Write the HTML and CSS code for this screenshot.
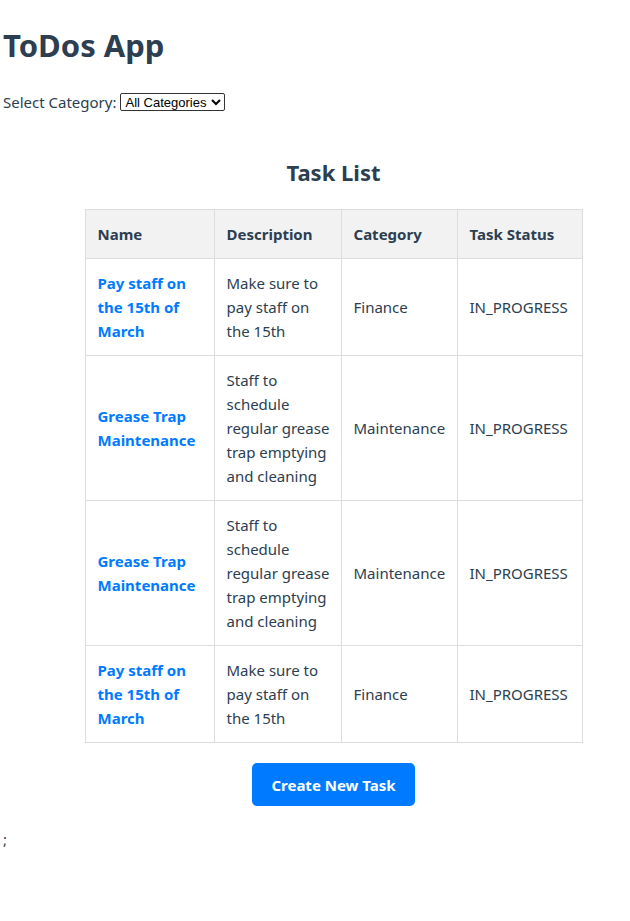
FILE: index.html
```html
<!DOCTYPE html>
<html>
<head>
<meta charset="utf-8">
<link rel="stylesheet" href="styles.css">
</head>
<body>
<div class="app">
  <h1 class="title">ToDos App</h1>
  <div class="filter">
    <label class="filter-label">Select Category:</label>
    <select class="filter-select">
      <option>All Categories</option>
    </select>
  </div>
  <div class="tasks">
    <h2 class="tasks-title">Task List</h2>
    <table class="task-table">
      <colgroup>
        <col class="c1"><col class="c2"><col class="c3"><col class="c4">
      </colgroup>
      <thead>
        <tr><th>Name</th><th>Description</th><th>Category</th><th>Task Status</th></tr>
      </thead>
      <tbody>
        <tr>
          <td><a class="task-link" href="#">Pay staff on the 15th of March</a></td>
          <td>Make sure to pay staff on the 15th</td>
          <td>Finance</td>
          <td>IN_PROGRESS</td>
        </tr>
        <tr>
          <td><a class="task-link" href="#">Grease Trap Maintenance</a></td>
          <td>Staff to schedule <span class="nowrap">regular grease</span> <span class="nowrap">trap emptying</span> and cleaning</td>
          <td>Maintenance</td>
          <td>IN_PROGRESS</td>
        </tr>
        <tr>
          <td><a class="task-link" href="#">Grease Trap Maintenance</a></td>
          <td>Staff to schedule <span class="nowrap">regular grease</span> <span class="nowrap">trap emptying</span> and cleaning</td>
          <td>Maintenance</td>
          <td>IN_PROGRESS</td>
        </tr>
        <tr>
          <td><a class="task-link" href="#">Pay staff on the 15th of March</a></td>
          <td>Make sure to pay staff on the 15th</td>
          <td>Finance</td>
          <td>IN_PROGRESS</td>
        </tr>
      </tbody>
    </table>
    <div class="actions">
      <button class="create-btn">Create New Task</button>
    </div>
  </div>
  <div class="semi">;</div>
</div>
</body>
</html>
```

FILE: styles.css
```css
html, body {
  margin: 0;
  padding: 0;
  background: #fff;
}
body {
  font-family: "Noto Sans", "Open Sans", sans-serif;
  color: #2c3e50;
  font-size: 15px;
}
.app {
  padding: 0 3px;
}
.title {
  font-size: 31px;
  font-weight: 700;
  margin: 21px 0 0 0;
  line-height: 48px;
}
.filter {
  margin-top: 21px;
  display: flex;
  align-items: center;
  gap: 4px;
  line-height: 24px;
}
.filter-select {
  font-family: "Liberation Sans", Arial, sans-serif;
  font-size: 13px;
  height: 18px;
  width: 105px;
  padding: 0;
  border: 1px solid #333;
  border-radius: 2px;
  background: #fff;
  color: #000;
}
.tasks {
  padding-left: 37px;
  margin-top: 42px;
  display: flex;
  flex-direction: column;
  align-items: center;
}
.tasks-title {
  font-size: 22px;
  font-weight: 700;
  margin: 0 0 21px 0;
  line-height: 32px;
}
.task-table {
  border-collapse: collapse;
  table-layout: fixed;
  width: 497px;
  line-height: 24px;
}
.c1 { width: 129px; }
.c2 { width: 127px; }
.c3 { width: 116px; }
.c4 { width: 125px; }
.task-table th,
.task-table td {
  border: 1px solid #ddd;
  padding: 12px;
  text-align: left;
  vertical-align: middle;
}
.task-table th {
  background: #f2f2f2;
  font-weight: 700;
}
.nowrap {
  white-space: nowrap;
}
.task-link {
  color: #007bff;
  font-weight: 700;
  text-decoration: none;
}
.actions {
  margin-top: 20px;
}
.create-btn {
  background: #007bff;
  color: #fff;
  border: none;
  border-radius: 5px;
  font-family: inherit;
  font-weight: 700;
  font-size: 15px;
  width: 163px;
  height: 43px;
  padding: 0;
}
.semi {
  margin-top: 21px;
  line-height: 24px;
}
```
